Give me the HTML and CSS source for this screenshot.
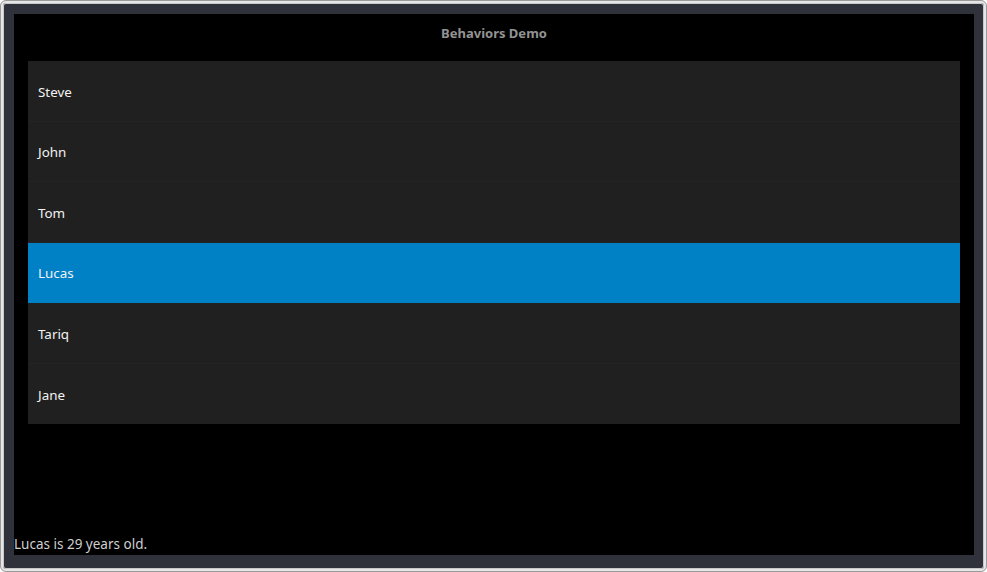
FILE: index.html
```html
<!DOCTYPE html>
<html>
<head>
<meta charset="utf-8">
<link rel="stylesheet" href="styles.css">
</head>
<body>
<div class="frame">
  <div class="screen">
    <div class="title">Behaviors Demo</div>
    <ul class="list">
      <li class="row">Steve</li>
      <li class="row">John</li>
      <li class="row">Tom</li>
      <li class="row selected">Lucas</li>
      <li class="row">Tariq</li>
      <li class="row">Jane</li>
    </ul>
    <div class="spacer"></div>
    <div class="status">Lucas is 29 years old.</div>
  </div>
</div>
</body>
</html>
```
FILE: styles.css
```css
html, body {
  margin: 0;
  padding: 0;
  background: #ffffff;
}
body {
  width: 987px;
  height: 572px;
  overflow: hidden;
  font-family: "Noto Sans", "Open Sans", sans-serif;
}
.frame {
  box-sizing: border-box;
  width: 987px;
  height: 572px;
  border: 3px solid #e6e6e6;
  box-shadow: inset 0 0 0 1px #c8c8c8;
  outline: 1px solid #9a9a9a;
  outline-offset: -1px;
  border-radius: 6px;
  background: #2f323b;
  padding: 11px 10px 14px 11px;
}
.screen {
  box-sizing: border-box;
  height: 100%;
  background: #000000;
  display: flex;
  flex-direction: column;
}
.title {
  height: 47px;
  display: flex;
  align-items: center;
  justify-content: center;
  padding-bottom: 9px;
  box-sizing: border-box;
  color: #939393;
  font-weight: bold;
  font-size: 13px;
}
.list {
  list-style: none;
  margin: 0 14px;
  padding: 0;
  background: #202020;
}
.row {
  box-sizing: border-box;
  height: 60.5px;
  display: flex;
  align-items: center;
  padding-left: 10px;
  padding-top: 2px;
  color: #f2f2f2;
  font-size: 13.4px;
  border-bottom: 1px solid #242424;
}
.row:last-child {
  border-bottom: none;
}
.row.selected {
  background: #0081c6;
  border-bottom-color: #0081c6;
}
.spacer {
  flex: 1;
}
.status {
  color: #cfcfcf;
  font-size: 13.5px;
  line-height: 16px;
  padding-bottom: 3px;
}
```
